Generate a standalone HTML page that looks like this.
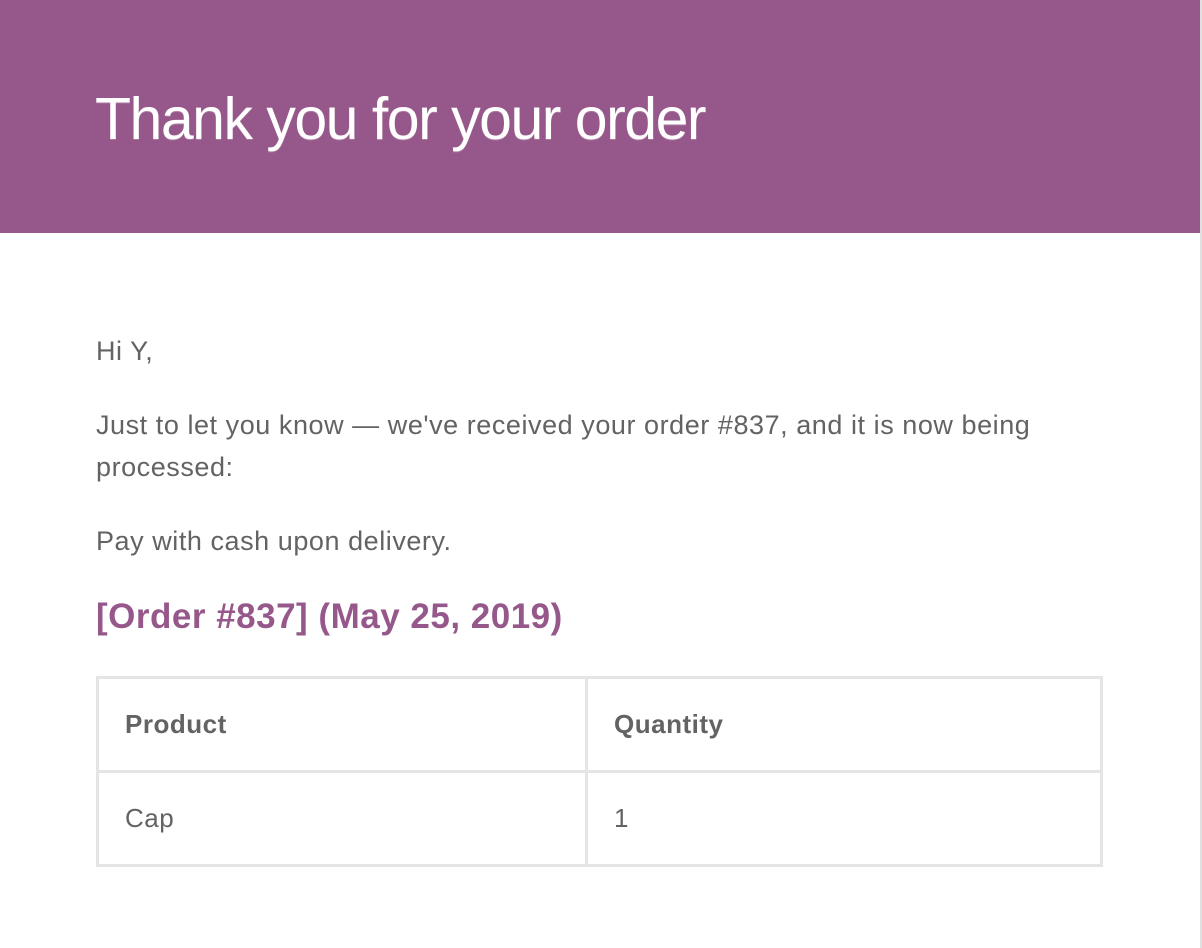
<!DOCTYPE html>
<html><head><meta charset="utf-8"><style>
html,body{margin:0;padding:0;background:#fff;width:1202px;height:948px;overflow:hidden;font-family:"Liberation Sans",Arial,sans-serif;color:#636363}
.hdr{position:absolute;left:0;top:0;width:1200px;height:233px;background:#96588a}
.hdr h1{position:absolute;left:95px;top:84px;margin:0;font-weight:300;font-size:59px;color:#fff;letter-spacing:-1.5px;line-height:70px;text-shadow:0 1px 0 #ab79a1}
.rb{position:absolute;left:1200px;top:0;width:2px;height:948px;background:#e0e0e0}
p{position:absolute;left:96px;margin:0;font-size:27px;letter-spacing:0.55px;line-height:42px;width:980px}
h2{position:absolute;left:96px;top:596px;margin:0;font-size:35px;font-weight:bold;color:#96588a;line-height:42px;letter-spacing:0.5px}
table{position:absolute;left:96px;top:676px;border-collapse:collapse;width:1007px;font-size:26px;letter-spacing:0.5px}
td,th{border:3px solid #e5e5e5;text-align:left;padding:0 0 0 26px;height:91px;color:#636363}
th{font-weight:bold}
</style></head><body>
<div class="hdr"><h1>Thank you for your order</h1></div>
<div class="rb"></div>
<p style="top:330px">Hi Y,</p>
<p style="top:404px">Just to let you know — we've received your order #837, and it is now being processed:</p>
<p style="top:520px">Pay with cash upon delivery.</p>
<h2>[Order #837] (May 25, 2019)</h2>
<table><tr><th style="width:460px">Product</th><th>Quantity</th></tr>
<tr><td>Cap</td><td>1</td></tr></table>
</body></html>
